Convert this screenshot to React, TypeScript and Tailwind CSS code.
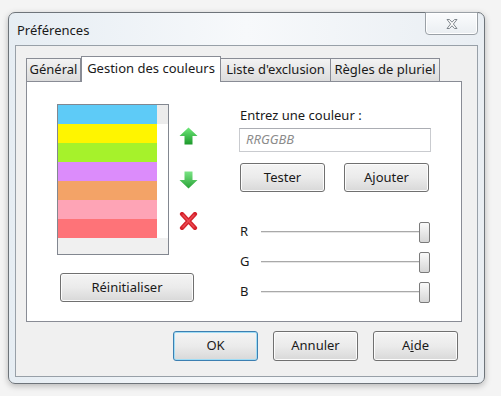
import React from 'react';

const font = {fontFamily: '"Noto Sans", "Open Sans", sans-serif'};

const stripes = ['bg-[#5ecbf7]', 'bg-[#fff500]', 'bg-[#a6f22b]', 'bg-[#dc8cfb]', 'bg-[#f3a367]', 'bg-[#fea4b6]', 'bg-[#fe7378]'];

function Button({label, className, primary}: {label: React.ReactNode; className: string; primary?: boolean}) {
    return (
        <div
            className={`${className} flex items-center justify-center rounded-[3px] border ${
                primary ? 'border-[#3c7fb1] shadow-[inset_0_0_0_1px_#9fdcf5]' : 'border-[#707070] shadow-[inset_0_0_0_1px_#fcfcfc]'
            } bg-gradient-to-b from-[#f4f4f4] via-[#ebebeb] to-[#d8d8d8] text-[13px] text-[#1a1a1a]`}
        >
            {label}
        </div>
    );
}

function Arrow({down}: {down?: boolean}) {
    return (
        <svg width="19" height="18" viewBox="0 0 19 18" className={down ? 'rotate-180' : ''}>
            <defs>
                <linearGradient id={down ? 'gd' : 'gu'} x1="0" y1="0" x2="0" y2="1">
                    <stop offset="0" stopColor={down ? '#28a236' : '#6fe97a'} />
                    <stop offset="1" stopColor={down ? '#7ae484' : '#1c982a'} />
                </linearGradient>
            </defs>
            <polygon points="9.5,0.5 18.5,9 13.5,9 13.5,17.5 5.5,17.5 5.5,9 0.5,9" fill={`url(#${down ? 'gd' : 'gu'})`} />
        </svg>
    );
}

function Cross() {
    return (
        <svg width="19" height="18" viewBox="0 0 19 18">
            <path d="M3 2 L16 16 M16 2 L3 16" stroke="#d5232d" strokeWidth="4.2" strokeLinecap="round" />
            <path d="M4 3 L15 15 M15 3 L4 15" stroke="#ec4a52" strokeWidth="1.5" strokeLinecap="round" />
        </svg>
    );
}

function Slider({label}: {label: string}) {
    return (
        <div className="flex h-[30px] items-center">
            <span className="w-[22px] pl-[1px] text-[13px] text-[#1a1a1a]">{label}</span>
            <div className="flex flex-1 flex-col">
                <div className="h-[1px] bg-[#a9a9a9]" />
                <div className="h-[1px] bg-[#e6e6e6]" />
            </div>
            <div className="mr-[1px] h-[21px] w-[11px] rounded-[2px] border border-[#7a7a7a] bg-gradient-to-b from-[#fafafa] to-[#d6d6d6]" />
        </div>
    );
}

export default function App() {
    return (
        <div className="h-[396px] w-[501px] bg-[#f4f4f4] pl-[8px] pt-[12px]" style={font}>
            <div className="flex h-[372px] w-[477px] flex-col rounded-[7px] border border-[#6e747a] bg-gradient-to-r from-[#e6edf3] via-[#f7f9fb] to-[#e9eef3] shadow-[0_2px_6px_rgba(0,0,0,0.25)]">
                {/* title bar */}
                <div className="flex h-[32px] items-start justify-between">
                    <span className="pl-[8px] pt-[8px] text-[13px] leading-[18px] text-[#1a1a1a]">Préférences</span>
                    <div className="mr-[6px] -mt-[1px] flex h-[23px] w-[53px] items-center justify-center rounded-b-[4px] border border-[#9aa0a6] bg-gradient-to-b from-[#fbfcfd] to-[#eaeef2] shadow-[inset_0_0_0_1px_#ffffff]">
                        <svg width="12" height="10" viewBox="0 0 12 10">
                            <path d="M1 0.5 L3.5 0.5 L6 3.2 L8.5 0.5 L11 0.5 L7.4 5 L11 9.5 L8.5 9.5 L6 6.8 L3.5 9.5 L1 9.5 L4.6 5 Z" fill="#fbfbfb" stroke="#737a81" strokeWidth="0.9" />
                        </svg>
                    </div>
                </div>

                {/* client area */}
                <div className="mx-[6px] mb-[6px] flex flex-1 flex-col border border-[#98a0a8] bg-[#f0f0f0] pl-[10px] pr-[19px] pt-[10px] pb-[15px]">
                    {/* tabs */}
                    <div className="relative z-10 flex h-[25px] items-end text-[13px] text-[#1a1a1a]">
                        <div className="flex h-[23px] w-[55px] items-center justify-center border border-b-0 border-[#898c95] bg-gradient-to-b from-[#f3f3f3] to-[#dcdcdc]">Général</div>
                        <div className="-mb-[1px] flex h-[26px] w-[140px] items-start justify-center border border-b-0 border-[#898c95] bg-white pt-[2px]">Gestion des couleurs</div>
                        <div className="flex h-[23px] w-[110px] items-center justify-center border border-b-0 border-l-0 border-[#898c95] bg-gradient-to-b from-[#f3f3f3] to-[#dcdcdc]">Liste d'exclusion</div>
                        <div className="flex h-[23px] w-[109px] items-center justify-center border border-b-0 border-l-0 border-[#898c95] bg-gradient-to-b from-[#f3f3f3] to-[#dcdcdc]">Règles de pluriel</div>
                    </div>

                    {/* panel */}
                    <div className="flex h-[241px] w-[436px] border border-[#898c95] bg-white pl-[30px] pt-[22px]">
                        <div className="flex flex-col">
                            <div className="flex">
                                <div className="flex h-[151px] w-[112px] flex-col border border-[#828790] bg-[#f0f0f0]">
                                    {stripes.map((c, i) => (
                                        <div key={i} className={`flex h-[19px] ${i === 0 ? 'bg-[#ececec]' : 'bg-white'}`}>
                                            <div className={`${c} w-[99px]`} />
                                        </div>
                                    ))}
                                </div>
                                <div className="ml-[10px] flex flex-col pt-[23px]">
                                    <Arrow />
                                    <div className="mt-[26px]">
                                        <Arrow down />
                                    </div>
                                    <div className="mt-[23px]">
                                        <Cross />
                                    </div>
                                </div>
                            </div>
                            <Button label="Réinitialiser" className="ml-[3px] mt-[18px] h-[29px] w-[134px]" />
                        </div>

                        <div className="ml-[41px] flex w-[192px] flex-col">
                            <span className="mt-[2px] h-[18px] pl-[1px] text-[13px] leading-[18px] text-[#1a1a1a]">Entrez une couleur :</span>
                            <div className="mt-[4px] flex h-[24px] items-center border border-[#c9cbcf] border-t-[#abadb3] bg-white pl-[6px] text-[13px] italic text-[#8c8c8c]">RRGGBB</div>
                            <div className="mt-[11px] flex gap-[19px] pl-[1px]">
                                <Button label="Tester" className="h-[29px] w-[85px]" />
                                <Button label="Ajouter" className="h-[29px] w-[85px]" />
                            </div>
                            <div className="mt-[25px] flex flex-col">
                                <Slider label="R" />
                                <Slider label="G" />
                                <Slider label="B" />
                            </div>
                        </div>
                    </div>

                    {/* bottom buttons */}
                    <div className="mt-[9px] flex justify-end gap-[15px]">
                        <Button label="OK" primary className="h-[30px] w-[85px]" />
                        <Button label="Annuler" className="h-[30px] w-[85px]" />
                        <Button
                            label={
                                <span>
                                    A<span className="underline">i</span>de
                                </span>
                            }
                            className="h-[30px] w-[85px]"
                        />
                    </div>
                </div>
            </div>
        </div>
    );
}
